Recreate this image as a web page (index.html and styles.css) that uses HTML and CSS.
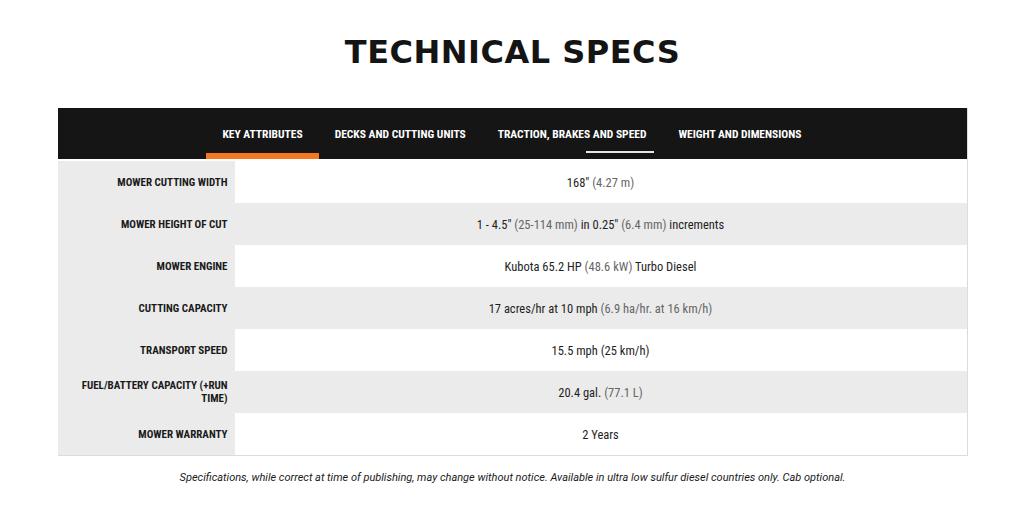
FILE: index.html
```html
<!DOCTYPE html>
<html>
<head>
<meta charset="utf-8">
<link rel="stylesheet" href="styles.css">
</head>
<body>
<main class="page">
  <h1 class="title">TECHNICAL SPECS</h1>
  <section class="specs">
    <nav class="tabs">
      <span class="tab active">KEY ATTRIBUTES</span>
      <span class="tab">DECKS AND CUTTING UNITS</span>
      <span class="tab hover">TRACTION, BRAKES AND SPEED</span>
      <span class="tab">WEIGHT AND DIMENSIONS</span>
    </nav>
    <div class="rows">
      <div class="row"><div class="label">MOWER CUTTING WIDTH</div><div class="value">168" <span class="metric">(4.27 m)</span></div></div>
      <div class="row alt"><div class="label">MOWER HEIGHT OF CUT</div><div class="value">1 - 4.5" <span class="metric">(25-114 mm)</span> in 0.25" <span class="metric">(6.4 mm)</span> increments</div></div>
      <div class="row"><div class="label">MOWER ENGINE</div><div class="value">Kubota 65.2 HP <span class="metric">(48.6 kW)</span> Turbo Diesel</div></div>
      <div class="row alt"><div class="label">CUTTING CAPACITY</div><div class="value">17 acres/hr at 10 mph <span class="metric">(6.9 ha/hr. at 16 km/h)</span></div></div>
      <div class="row"><div class="label">TRANSPORT SPEED</div><div class="value">15.5 mph (25 km/h)</div></div>
      <div class="row alt"><div class="label">FUEL/BATTERY CAPACITY (+RUN TIME)</div><div class="value">20.4 gal. <span class="metric">(77.1 L)</span></div></div>
      <div class="row"><div class="label">MOWER WARRANTY</div><div class="value">2 Years</div></div>
    </div>
  </section>
  <p class="note">Specifications, while correct at time of publishing, may change without notice. Available in ultra low sulfur diesel countries only. Cab optional.</p>
</main>
</body>
</html>
```
FILE: styles.css
```css
html, body {
  margin: 0;
  padding: 0;
  background: #fff;
}
.page {
  width: 910px;
  margin: 0 auto;
  padding-top: 33px;
  font-family: Roboto, "Liberation Sans", sans-serif;
  font-stretch: 75%;
  color: #1a1a1a;
}
.title {
  margin: 0 0 37px;
  text-align: center;
  font-family: "DejaVu Sans", sans-serif;
  font-stretch: normal;
  font-weight: bold;
  font-size: 32px;
  line-height: 38px;
  letter-spacing: 0.5px;
  color: #141414;
}
.specs {
  border-right: 1px solid #dcdcdc;
  border-bottom: 1px solid #dcdcdc;
}
.tabs {
  position: relative;
  display: flex;
  justify-content: center;
  height: 51px;
  background: #151515;
  margin-bottom: 2px;
}
.tab {
  position: relative;
  display: flex;
  align-items: center;
  padding: 0 16px;
  color: #fff;
  font-weight: bold;
  font-size: 11.5px;
}
.tab.active::after {
  content: "";
  position: absolute;
  left: 0;
  right: 0;
  bottom: 0;
  height: 6px;
  background: #f47721;
}
.tab.hover::after {
  content: "";
  position: absolute;
  left: 104px;
  width: 68px;
  bottom: 6px;
  height: 2px;
  background: #e6e6e6;
}
.row {
  display: flex;
  height: 42px;
}
.label {
  width: 177px;
  flex: none;
  box-sizing: border-box;
  padding: 0 7px 0 14px;
  display: flex;
  align-items: center;
  justify-content: flex-end;
  text-align: right;
  background: #ebebeb;
  font-weight: bold;
  font-size: 11px;
  line-height: 13px;
  color: #1a1a1a;
}
.value {
  flex: 1;
  display: flex;
  align-items: center;
  justify-content: center;
  white-space: pre;
  font-size: 12.5px;
  color: #1e1e1e;
  background: #fff;
}
.row.alt .value {
  background: #ebebeb;
}
.metric {
  color: #666;
}
.note {
  margin: 15px 0 0;
  text-align: center;
  font-style: italic;
  font-size: 11px;
  font-stretch: 96%;
  color: #1a1a1a;
}
```
